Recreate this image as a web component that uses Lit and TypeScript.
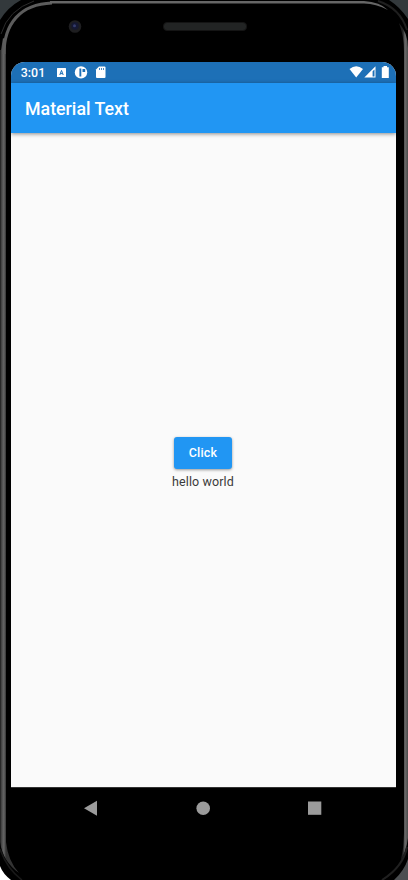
import { LitElement, html, css } from "lit";
import { customElement, state } from "lit/decorators.js";

@customElement("app-root")
export class AppRoot extends LitElement {
  static styles = css`
    :host {
      display: block;
      font-family: Roboto, sans-serif;
    }
    .phone {
      position: relative;
      box-sizing: border-box;
      width: 408px;
      height: 880px;
      padding: 0 12px 0 11px;
      overflow: hidden;
      display: flex;
      flex-direction: column;
      background: #000;
    }
    .frame {
      position: absolute;
      inset: 0;
      display: block;
    }
    .bezel {
      height: 62px;
      flex: none;
    }
    .screen {
      position: relative;
      height: 725px;
      display: flex;
      flex-direction: column;
      background: #fafafa;
      border-radius: 14px 14px 0 0;
      overflow: hidden;
    }
    .status {
      height: 21px;
      flex: none;
      background: #1d70b7;
      display: block;
    }
    .status svg {
      display: block;
    }
    .bar {
      height: 50px;
      flex: none;
      box-sizing: border-box;
      display: flex;
      align-items: center;
      padding: 2px 14px 0;
      background: #2196f3;
      color: #fff;
      font-size: 17.8px;
      font-weight: 500;
      line-height: 24px;
      box-shadow: 0 1px 4px rgba(0, 0, 0, 0.45);
      z-index: 1;
    }
    .content {
      flex: 1;
      display: flex;
      flex-direction: column;
      align-items: center;
      padding: 304px 1px 0 0;
    }
    .button {
      width: 58px;
      height: 32px;
      padding: 0;
      border: 0;
      border-radius: 3px;
      background: #2196f3;
      color: #fff;
      font: 500 12.5px/32px Roboto, sans-serif;
      letter-spacing: 0.2px;
      box-shadow: 0 1px 3px rgba(0, 0, 0, 0.4);
    }
    .message {
      margin-top: 5px;
      font-size: 12.5px;
      line-height: 16px;
      letter-spacing: 0.1px;
      color: #3a3a3a;
    }
    .nav {
      position: relative;
      height: 43px;
      flex: none;
    }
    .nav svg {
      display: block;
    }
  `;

  @state() private message = "hello world";

  private frame() {
    return html`<svg class="frame" width="408" height="880" viewBox="0 0 408 880" fill="none">
      <defs>
        <linearGradient id="left" x1="0" x2="6" y1="0" y2="0" gradientUnits="userSpaceOnUse">
          <stop offset="0" stop-color="#1c1c1c" />
          <stop offset=".3" stop-color="#4c4c4c" />
          <stop offset=".65" stop-color="#666" />
          <stop offset="1" stop-color="#333" />
        </linearGradient>
        <linearGradient id="right" x1="403" x2="408" y1="0" y2="0" gradientUnits="userSpaceOnUse">
          <stop offset="0" stop-color="#222" />
          <stop offset=".4" stop-color="#6b6b6b" />
          <stop offset="1" stop-color="#4a4a4a" />
        </linearGradient>
      </defs>
      <path d="M0 0H21Q8 7 0 20Z" fill="#33393c" />
      <path d="M389 0H408V19Q400 7 389 0Z" fill="#33393c" />
      <path d="M1 34Q8 10 34 1" stroke="#2b2b2b" />
      <path d="M1 50Q2 44 3 38L6 40V842Q8 861 19 873Q3 862 0 842V50Z" fill="url(#left)" />
      <path d="M4 54C4 24 20 4 52 3" stroke="#5c5c5c" stroke-width="3" />
      <path d="M50 1H364Q380 2 388 10Q376 4 364 3.6H50Z" fill="#666" />
      <path d="M399 23Q408 33 408 48V838Q406 852 401 860Q404 847 404 833V52Q404 36 399 23Z" fill="url(#right)" />
      <path d="M378 1Q400 8 407 30" stroke="#1f1f1f" stroke-width="2" />
      <path d="M0 849Q7 869 22 880" stroke="#191919" stroke-width="1.5" />
      <path d="M0 866Q3 874 11 880H0Z" fill="#fff" />
      <path d="M407 847Q403 867 382 880" stroke="#202020" stroke-width="2" />
      <path d="M408 859Q404 871 394 880H408Z" fill="#4b4e51" />
      <circle cx="75" cy="26.5" r="6.3" fill="#1e1e20" />
      <circle cx="75" cy="26" r="3.7" fill="#151832" />
      <circle cx="74.5" cy="25.7" r="1.5" fill="#343b6b" />
      <rect x="163.5" y="22.5" width="83" height="8" rx="3.5" fill="#222424" stroke="#141414" />
    </svg>`;
  }

  private status() {
    return html`<svg width="385" height="21" viewBox="11 62 385 21" fill="#fff">
      <text x="20.8" y="77" font-size="12.4" font-weight="500">3:01</text>
      <rect x="57" y="68" width="9" height="9" rx=".6" />
      <path d="M59.8 75L61.5 70.4L63.2 75M60.4 73.6H62.6" fill="none" stroke="#1d70b7" stroke-width="1" />
      <circle cx="81" cy="72.4" r="6.2" />
      <path d="M79.4 68.5H81.3V76.5H79.4ZM82.5 69H85.2V72H82.5Z" fill="#1d70b7" />
      <path d="M99 66.5H104.5Q105.5 66.5 105.5 67.5V77Q105.5 78 104.5 78H97Q96 78 96 77V69.5Z" />
      <path d="M99.5 68V70M101.5 68V70M103.5 68V70" stroke="#1d70b7" stroke-width="1" opacity=".8" />
      <path d="M349.5 69Q356.2 63.5 363 69L356.2 77.5Z" />
      <path d="M364.3 77.6L375.5 66.2V77.6Z" />
      <path d="M372.6 71.2L374.5 69.4V76.6H372.6Z" fill="#1d70b7" />
      <path d="M383.5 66H387V67.2H388.8V78H381.8V67.2H383.5Z" />
    </svg>`;
  }

  render() {
    return html`<div class="phone">
      ${this.frame()}
      <div class="bezel"></div>
      <main class="screen">
        <div class="status">${this.status()}</div>
        <header class="bar">Material Text</header>
        <section class="content">
          <button class="button">Click</button>
          <div class="message">${this.message}</div>
        </section>
      </main>
      <nav class="nav">
        <svg width="385" height="43" viewBox="11 787 385 43" fill="#9b9b9b">
          <path d="M11 787.5H396" stroke="#333" />
          <path d="M84 808.2L97 800.8V815.8Z" />
          <circle cx="203.2" cy="808.2" r="6.8" />
          <rect x="308" y="801.5" width="13.3" height="13.3" />
        </svg>
      </nav>
    </div>`;
  }
}
